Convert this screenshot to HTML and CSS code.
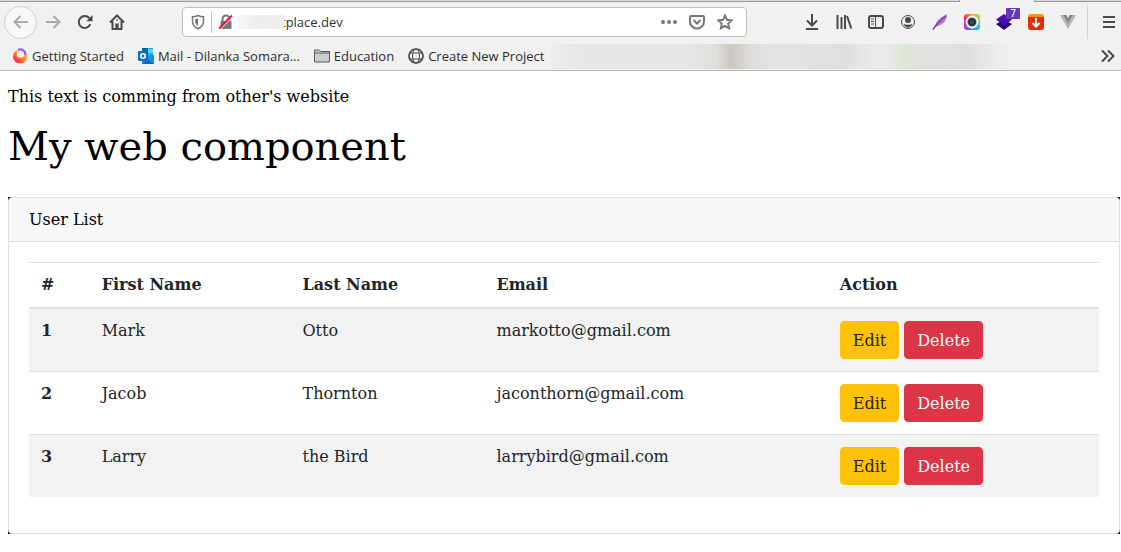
FILE: index.html
```html
<!DOCTYPE html>
<html lang="en">
<head>
    <meta charset="UTF-8">
    <meta name="viewport" content="width=device-width, initial-scale=1.0">
    <title>My web component</title>
    <link rel="stylesheet" href="styles.css">
</head>
<body>
    <header class="browser">
        <div class="tab-strip"><span class="active-tab"></span></div>

        <div class="nav-bar">
            <button class="tool back" aria-label="Back">
                <svg width="16" height="16" viewBox="0 0 16 16"><path d="M15 8H1.500M7.500 2L1.500 8l6 6"/></svg>
            </button>
            <button class="tool forward" aria-label="Forward">
                <svg width="16" height="16" viewBox="0 0 16 16"><path d="M1 8h13.500M8.500 2l6 6-6 6"/></svg>
            </button>
            <button class="tool" aria-label="Reload">
                <svg width="16" height="16" viewBox="0 0 16 16"><path d="M13.300 10.200A6 6 0 1 1 12.300 4"/><path class="solid" d="M15.500 1v6.200H9.300z"/></svg>
            </button>
            <button class="tool" aria-label="Home">
                <svg width="16" height="16" viewBox="0 0 16 16"><path d="M1 8.500L8 1.500l7 7M3.500 7v8h9V7"/><path class="solid" d="M6.300 15V9.500h3.400V15z"/><path class="thin" d="M8 5v2"/></svg>
            </button>

            <div class="url-bar">
                <svg class="shield" width="14" height="16" viewBox="0 0 14 16"><path d="M7 1.500C5 2.600 3.500 2.800 1.500 2.800v4.500c0 3.600 2.500 6.200 5.500 7.400 3-1.200 5.500-3.800 5.500-7.400V2.800C10.500 2.800 9 2.600 7 1.500z"/><path class="solid" d="M7 4.200c-1 .5-1.700.6-2.800.7v2.700c0 2 1 3.400 2.800 4.400z"/></svg>
                <span class="url-divider"></span>
                <svg class="lock" width="16" height="16" viewBox="0 0 16 16"><path d="M4.500 8V5a3.500 3.500 0 0 1 7 0v3"/><rect class="solid" x="2.500" y="7" width="11" height="8" rx="1"/><path class="slash-gap" d="M2 15.500L14.500 3"/><path class="slash" d="M1 14.500L14 1.500"/></svg>
                <span class="url-mask"></span>
                <input class="url-input" type="text" value="tplace.dev" aria-label="Address">
                <button class="url-action" aria-label="Page actions">
                    <svg width="16" height="16" viewBox="0 0 16 16"><g class="solid"><circle cx="2" cy="8" r="2"/><circle cx="8" cy="8" r="2"/><circle cx="14" cy="8" r="2"/></g></svg>
                </button>
                <button class="url-action" aria-label="Save to Pocket">
                    <svg width="16" height="16" viewBox="0 0 16 16"><path d="M2 2h12a1 1 0 0 1 1 1v4.500a7 7 0 0 1-14 0V3a1 1 0 0 1 1-1zM4.500 6L8 9.500 11.500 6"/></svg>
                </button>
                <button class="url-action" aria-label="Bookmark this page">
                    <svg width="16" height="16" viewBox="0 0 16 16"><path d="M8 1.500l2 4.300 4.700.6-3.500 3.200.9 4.700L8 12l-4.100 2.300.9-4.700L1.300 6.400 6 5.800z"/></svg>
                </button>
            </div>

            <button class="tool" aria-label="Downloads">
                <svg width="16" height="16" viewBox="0 0 16 16"><path d="M8 0v11M3 6.500l5 5 5-5M2 15h12"/></svg>
            </button>
            <button class="tool" aria-label="Library">
                <svg width="16" height="16" viewBox="0 0 16 16"><path d="M1.500 1v14M5.500 3v12M9 1v14M11 2l4.300 12.500"/></svg>
            </button>
            <button class="tool" aria-label="Sidebars">
                <svg width="16" height="16" viewBox="0 0 16 16"><rect x="1" y="2" width="14" height="12" rx="2"/><path class="thin" d="M7.500 2v12M3 5h3M3 7.500h3M3 10h3"/></svg>
            </button>
            <button class="tool" aria-label="Account">
                <svg width="16" height="16" viewBox="0 0 16 16"><circle class="thin" cx="8" cy="8" r="6.500"/><circle class="solid" cx="8" cy="6" r="3"/><path class="solid" d="M3.500 10c1.500 1 7.500 1 9 0-.7 2.300-2.500 3.500-4.500 3.500S4.200 12.300 3.500 10z"/></svg>
            </button>
            <button class="tool" aria-label="Feather extension">
                <svg width="16" height="16" viewBox="0 0 16 16"><path class="vane" d="M15 0c.3 6-4 11.500-12 12.500C3 7 9 3 15 0z"/><path class="quill" d="M1 15.500C5 9.500 9 6 14 2"/></svg>
            </button>
            <button class="tool" aria-label="Screen capture extension">
                <span class="capture">
                    <svg width="16" height="16" viewBox="0 0 16 16"><circle class="lens" cx="8" cy="8" r="5.500"/><circle class="lens-ring" cx="8" cy="8" r="3"/></svg>
                </span>
            </button>
            <button class="tool stack" aria-label="Layers extension">
                <svg width="16" height="16" viewBox="0 0 16 16"><path class="layer-low" d="M0 10l8-4 8 4-8 6z"/><path class="layer-top" d="M0 5.500L8 0l8 5.500L8 12z"/></svg>
                <span class="badge">7</span>
            </button>
            <button class="tool" aria-label="Downloader extension">
                <svg width="16" height="16" viewBox="0 0 16 16"><rect class="box-lid" width="16" height="16" rx="3"/><path class="box" d="M0 3h16v10a3 3 0 0 1-3 3H3a3 3 0 0 1-3-3z"/><path class="box-arrow" d="M8 4v8M4.500 9L8 12.500 11.500 9"/></svg>
            </button>
            <button class="tool" aria-label="Vue extension">
                <svg width="16" height="16" viewBox="0 0 16 16"><path class="vue-outer" d="M0 1h16L8 15z"/><path class="vue-inner" d="M3.300 1h9.400L8 9.500z"/><path class="vue-notch" d="M6.300 1h3.400L8 4z"/></svg>
            </button>
            <span class="menu-divider"></span>
            <button class="tool menu" aria-label="Menu">
                <svg width="16" height="16" viewBox="0 0 16 16"><path d="M2 3h12M2 8h12M2 13h12"/></svg>
            </button>
        </div>

        <nav class="bookmarks">
            <a href="#">
                <svg width="16" height="16" viewBox="0 0 16 16">
                    <defs><linearGradient id="fox" x1="1" y1="0" x2="0.200" y2="1"><stop offset="0" stop-color="#ffe14a"/><stop offset="0.500" stop-color="#ff8a1f"/><stop offset="1" stop-color="#f5156c"/></linearGradient></defs>
                    <circle cx="8" cy="8.500" r="7" fill="url(#fox)"/><circle cx="8.500" cy="6" r="3.800" fill="#f3e9f8"/><path d="M6 1.700c4-1.500 8 1.500 7.300 5.300" fill="none" stroke="#9059ff" stroke-width="2"/>
                </svg>
                <span>Getting Started</span>
            </a>
            <a href="#">
                <svg width="16" height="16" viewBox="0 0 16 16"><path fill="#28a8ea" d="M4 0h11v9H4z"/><path fill="#50d9ff" d="M10 1h5v4h-5z"/><path fill="#0a64ad" d="M4 0h6v4H4z"/><path fill="#1490df" d="M4 9l12-2v9H4z"/><path fill="#1066b5" d="M9 11l7 5H5z"/><rect y="3" width="10" height="10" rx="1" fill="#0f6cbd"/><circle cx="5" cy="8" r="2.300" fill="none" stroke="#fff" stroke-width="1.500"/></svg>
                <span>Mail - Dilanka Somara…</span>
            </a>
            <a href="#">
                <svg width="16" height="16" viewBox="0 0 16 16"><path fill="#ccc" stroke="#5a5a5a" d="M.5 14V2h5l1.500 1.500h8.500V14z"/><path stroke="#5a5a5a" d="M.5 5h15"/></svg>
                <span>Education</span>
            </a>
            <a href="#">
                <svg width="16" height="16" viewBox="0 0 16 16" fill="none" stroke="#4a4a4a"><circle cx="8" cy="8" r="7" stroke-width="1.700"/><ellipse cx="8" cy="8" rx="3.500" ry="7"/><path d="M2 5h12M2 11h12"/></svg>
                <span>Create New Project</span>
            </a>
            <span class="smudge"></span>
            <button class="overflow" aria-label="More bookmarks">
                <svg width="16" height="16" viewBox="0 0 16 16"><path d="M2 2.500L7.500 8 2 13.500M8 2.500L13.500 8 8 13.500"/></svg>
            </button>
        </nav>
    </header>

    <main class="page">
        <p class="intro">This text is comming from other's website</p>
        <h1>My web component</h1>

        <div class="card-wrap">
            <section class="card">
                <div class="card-header">User List</div>
                <div class="card-body">
                    <table class="table">
                        <thead>
                            <tr>
                                <th scope="col">#</th>
                                <th scope="col">First Name</th>
                                <th scope="col">Last Name</th>
                                <th scope="col">Email</th>
                                <th scope="col">Action</th>
                            </tr>
                        </thead>
                        <tbody>
                            <tr>
                                <th scope="row">1</th>
                                <td>Mark</td>
                                <td>Otto</td>
                                <td>markotto@gmail.com</td>
                                <td>
                                    <button class="btn btn-warning">Edit</button>
                                    <button class="btn btn-danger">Delete</button>
                                </td>
                            </tr>
                            <tr>
                                <th scope="row">2</th>
                                <td>Jacob</td>
                                <td>Thornton</td>
                                <td>jaconthorn@gmail.com</td>
                                <td>
                                    <button class="btn btn-warning">Edit</button>
                                    <button class="btn btn-danger">Delete</button>
                                </td>
                            </tr>
                            <tr>
                                <th scope="row">3</th>
                                <td>Larry</td>
                                <td>the Bird</td>
                                <td>larrybird@gmail.com</td>
                                <td>
                                    <button class="btn btn-warning">Edit</button>
                                    <button class="btn btn-danger">Delete</button>
                                </td>
                            </tr>
                        </tbody>
                    </table>
                </div>
            </section>
        </div>
    </main>
</body>
</html>
```

FILE: styles.css
```css
* {
    box-sizing: border-box;
}

body {
    margin: 0;
    background-color: #fff;
    color: #000;
    font-family: "DejaVu Serif", serif;
    font-size: 16px;
}

button {
    border: 0;
    padding: 0;
    background: none;
    font: inherit;
    cursor: pointer;
}

/* Browser toolbar */
.browser {
    background-color: #f1f1f1;
    border-bottom: 1px solid #b8b8b8;
    font-family: "Open Sans", sans-serif;
    font-size: 13px;
    color: #2e2e2e;
}

.tab-strip {
    display: flex;
    height: 2px;
    padding-right: 86px;
    background-color: #dadad8;
    border-bottom: 1px solid #999;
}

.active-tab {
    width: 76px;
    height: 2px;
    margin-left: auto;
    background-color: #f1f1f1;
    border-left: 1px solid #999;
    border-right: 1px solid #999;
}

.nav-bar {
    display: flex;
    align-items: center;
    height: 40px;
    padding-left: 4px;
}

.tool {
    display: flex;
    flex: none;
    align-items: center;
    justify-content: center;
    position: relative;
    width: 32px;
    height: 32px;
}

.tool svg,
.url-bar svg,
.overflow svg {
    fill: none;
    stroke: #4a4a4a;
    stroke-width: 2;
}

.back {
    width: 33px;
    height: 33px;
    border: 1px solid #cfcfcf;
    border-radius: 50%;
    background-color: #f8f8f8;
}

.back svg,
.forward svg {
    stroke: #aaa;
}

.tool .solid {
    fill: #4a4a4a;
    stroke: none;
}

.tool .thin {
    stroke-width: 1;
}

/* Extension icons */
.vane { fill: #b57fd4; stroke: none; }
.quill { stroke: #7b3aa5; stroke-width: 1.5; }
.lens { fill: #3c4a52; stroke: #fff; }
.lens-ring { stroke: #1e282e; stroke-width: 1; }
.layer-low { fill: #26007a; stroke: none; }
.layer-top { fill: #4a0fb0; stroke: none; }
.box-lid { fill: #ff9800; stroke: none; }
.box { fill: #e52d0b; stroke: none; }
.box-arrow { stroke: #fff; }
.vue-outer { fill: #b5b5b5; stroke: none; }
.vue-inner { fill: #858585; stroke: none; }
.vue-notch { fill: #f1f1f1; stroke: none; }

.capture {
    display: flex;
    width: 16px;
    height: 16px;
    border-radius: 3px;
    background: conic-gradient(#ffb020, #9be03a, #20c8e0, #2090ff, #c030e0, #ff2060, #ffb020);
}

.badge {
    position: absolute;
    top: 2px;
    right: 0;
    width: 14px;
    height: 11px;
    border-radius: 1px;
    background-color: #6739b7;
    color: #fff;
    font-size: 10px;
    line-height: 11px;
}

.menu {
    width: 24px;
}

.menu-divider {
    width: 1px;
    height: 34px;
    margin: 0 9px 0 3px;
    background-color: #d2d2d2;
}

.url-bar {
    display: flex;
    flex: 1;
    align-items: center;
    height: 30px;
    margin: 0 49px;
    padding: 0 7px 0 8px;
    background-color: #fff;
    border: 1px solid #bdbdbd;
    border-radius: 4px;
}

.url-bar svg {
    flex: none;
    stroke: #787878;
}

.url-bar .solid {
    fill: #787878;
    stroke: none;
}

.url-bar .shield {
    stroke-width: 1.5px;
}

.url-divider {
    width: 1px;
    height: 22px;
    margin: 0 6px;
    background-color: #c4c4c4;
}

.lock .slash-gap {
    stroke: #fff;
    stroke-width: 1;
}

.lock .slash {
    stroke: #f0133f;
}

.url-mask {
    flex: none;
    width: 46px;
    height: 14px;
    margin-left: 4px;
    margin-right: -3px;
    background: linear-gradient(to right, #f7f7f7, #ececec 50%, #f0f0f0);
    z-index: 1;
}

.url-input {
    flex: 1;
    min-width: 0;
    padding: 0;
    border: 0;
    outline: 0;
    background: none;
    color: #2e2e2e;
    font: inherit;
}

.url-action {
    display: flex;
    justify-content: center;
    width: 28px;
}

.bookmarks {
    display: flex;
    align-items: center;
    height: 28px;
    padding: 0 5px 0 12px;
}

.bookmarks a {
    display: flex;
    flex: none;
    align-items: center;
    gap: 4px;
    margin-right: 14px;
    color: inherit;
    text-decoration: none;
    white-space: nowrap;
}

.bookmarks a:last-of-type {
    margin-right: 7px;
}

.smudge {
    width: 460px;
    height: 25px;
    background: linear-gradient(to right, #ededed, #e4e5e7 8%, #e5e5e5 30%, #e0dedb 36%, #ccc7c1 39%, #e0dfdd 44%, #e3e3e3 50%, #dfdfdf 64%, #eaeaea 70%, #e9e9e9 73%, #dce6d8 77%, #e0e1df 81%, #dfdfdf 91%, #ededed 97%, #f1f1f1);
}

.overflow {
    display: flex;
    margin-left: auto;
}

/* Page content */
.page {
    padding: 16px 1px 16px 8px;
}

.intro {
    margin: 0 0 16px;
}

h1 {
    margin: 0 0 27px;
    font-size: 40px;
    font-weight: 400;
    line-height: 48px;
}

/* dark backing shows at the card's rounded corners */
.card-wrap {
    background-color: #000;
}

.card {
    background-color: #fff;
    border: 1px solid #dfdfdf;
    border-radius: 4px;
}

.card-header {
    padding: 12px 20px;
    background-color: #f7f7f7;
    border-bottom: 1px solid #dfdfdf;
    border-radius: 3px 3px 0 0;
}

.card-body {
    padding: 20px;
}

.table {
    width: 100%;
    margin-bottom: 16px;
    border-collapse: collapse;
    color: #212529;
}

.table th,
.table td {
    padding: 12px;
    border-top: 1px solid #dee2e6;
    text-align: left;
    vertical-align: top;
}

.table th {
    line-height: 20px;
}

.table thead th {
    border-bottom: 2px solid #dee2e6;
    vertical-align: bottom;
}

.table tbody tr:nth-child(odd) {
    background-color: #f2f2f2;
}

.btn {
    padding: 7px 12px 5px;
    border: 1px solid transparent;
    border-radius: 4px;
    line-height: 24px;
}

.btn-warning {
    background-color: #ffc107;
    border-color: #ffc107;
    color: #212529;
}

.btn-danger {
    background-color: #dc3545;
    border-color: #dc3545;
    color: #fff;
}
```
